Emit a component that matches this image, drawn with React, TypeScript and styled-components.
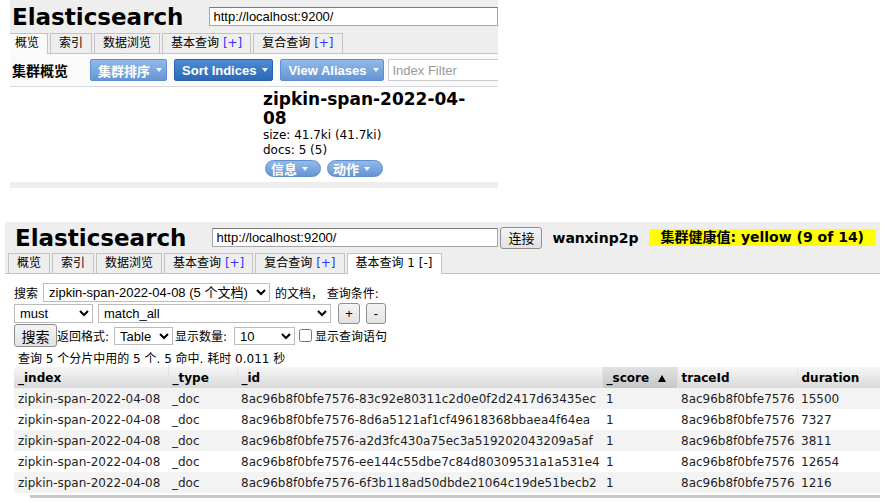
import styled, { createGlobalStyle } from "styled-components";

const GlobalStyle = createGlobalStyle`
  html, body {
    margin: 0;
    padding: 0;
    background: #fff;
  }
  body {
    font-family: "DejaVu Sans", "Noto Sans CJK SC", sans-serif;
    font-size: 12px;
    color: #000;
  }
`;

const Page = styled.div`
  width: 888px;
  height: 503px;
  overflow: hidden;
  display: flex;
  flex-direction: column;
`;

const Shot = styled.div<{ $left: number; $width: number; $top?: number }>`
  flex-shrink: 0;
  margin: ${(p) => p.$top ?? 0}px 0 0 ${(p) => p.$left}px;
  width: ${(p) => p.$width}px;
  overflow: hidden;
`;

const Head = styled.div`
  background: #eee;
`;

const TitleRow = styled.div<{ $height: number; $pad: number }>`
  display: flex;
  align-items: center;
  height: ${(p) => p.$height}px;
  padding-left: ${(p) => p.$pad}px;
  white-space: nowrap;
`;

const Brand = styled.div`
  font-family: "DejaVu Sans", sans-serif;
  font-weight: bold;
  font-size: 23px;
  line-height: 26px;
  flex-shrink: 0;
`;

const UrlInput = styled.input<{ $width: number; $gap: number }>`
  flex-shrink: 0;
  margin-left: ${(p) => p.$gap}px;
  width: ${(p) => p.$width}px;
  height: 19px;
  box-sizing: border-box;
  padding: 0 3px;
  border: 1px solid #a5a5a5;
  border-top-color: #7a7a7a;
  background: #fff;
  font-family: "Liberation Sans", Arial, sans-serif;
  font-size: 13px;
  color: #000;
  outline: none;
`;

const TabBar = styled.div<{ $pad: number }>`
  display: flex;
  align-items: flex-end;
  gap: 2px;
  height: 20px;
  padding-left: ${(p) => p.$pad}px;
  border-bottom: 1px solid #c4c4c4;
`;

const Tab = styled.div<{ $active?: boolean; $activeBg?: string }>`
  box-sizing: border-box;
  height: ${(p) => (p.$active ? 21 : 20)}px;
  margin-bottom: ${(p) => (p.$active ? -1 : 0)}px;
  padding: 0 8px;
  border: 1px solid #c4c4c4;
  border-bottom: none;
  background: ${(p) => (p.$active ? p.$activeBg ?? "#fff" : "#eee")};
  line-height: 19px;
  font-size: 12px;
  white-space: nowrap;
`;

const Plus = styled.span`
  color: #3333ff;
`;

/* ---------- top screenshot: cluster overview ---------- */

const Toolbar = styled.div`
  display: flex;
  align-items: center;
  height: 32px;
  padding-left: 2px;
  background: #fafafa;
  border-bottom: 1px solid #d5d9df;
  white-space: nowrap;
`;

const SectionLabel = styled.span`
  font-weight: bold;
  font-size: 14px;
  margin-right: 22px;
`;

const DropButton = styled.div<{ $tone: "light" | "dark" }>`
  display: inline-flex;
  align-items: center;
  gap: 6px;
  flex-shrink: 0;
  height: 22px;
  box-sizing: border-box;
  padding: 0 4px 0 7px;
  margin-right: 7px;
  border-radius: 2px;
  border: 1px solid ${(p) => (p.$tone === "dark" ? "#2b64ad" : "#5e8ed0")};
  background: ${(p) =>
    p.$tone === "dark"
      ? "linear-gradient(#4d8cd6, #2c69b6)"
      : "linear-gradient(#93b9e8, #6496d4)"};
  color: #fff;
  font-family: "Liberation Sans", "Noto Sans CJK SC", sans-serif;
  font-weight: bold;
  font-size: 13px;
`;

const Caret = styled.span`
  width: 0;
  height: 0;
  border-left: 3.5px solid transparent;
  border-right: 3.5px solid transparent;
  border-top: 4px solid rgba(255, 255, 255, 0.92);
`;

const FilterInput = styled.input`
  flex-shrink: 0;
  margin-left: -3px;
  width: 120px;
  height: 22px;
  box-sizing: border-box;
  padding: 0 4px;
  border: 1px solid #ccc;
  background: #fff;
  font-family: "Liberation Sans", Arial, sans-serif;
  font-size: 13px;
  outline: none;

  &::placeholder {
    color: #999;
  }
`;

const Overview = styled.div`
  height: 91px;
  box-sizing: border-box;
  overflow: hidden;
  padding: 3px 0 0 253px;
  background: #fff;
`;

const IndexCard = styled.div`
  width: 215px;
`;

const IndexName = styled.div`
  font-weight: bold;
  font-size: 17px;
  line-height: 19px;
`;

const Stat = styled.div`
  font-size: 12px;
  line-height: 15px;
`;

const PillRow = styled.div`
  display: flex;
  gap: 6px;
  margin-top: 2px;
  padding-left: 2px;
`;

const Pill = styled.div`
  display: inline-flex;
  align-items: center;
  gap: 5px;
  width: 56px;
  height: 17px;
  box-sizing: border-box;
  padding: 0 0 0 5px;
  border-radius: 9px;
  border: 1px solid #5e8ed0;
  background: linear-gradient(#93b9e8, #6496d4);
  color: #fff;
  font-family: "Noto Sans CJK SC", sans-serif;
  font-weight: bold;
  font-size: 13px;
  line-height: 15px;
`;

const FooterBar = styled.div`
  height: 6px;
  margin-top: 4px;
  background: #eee;
`;

/* ---------- bottom screenshot: basic query ---------- */

const PlainButton = styled.button<{ $w: number; $h: number }>`
  flex-shrink: 0;
  width: ${(p) => p.$w}px;
  height: ${(p) => p.$h}px;
  padding: 0;
  box-sizing: border-box;
  border: 1px solid #8f8f8f;
  border-radius: 3px;
  background: linear-gradient(#f4f4f4, #e2e2e2);
  font-family: "Liberation Sans", "Noto Sans CJK SC", sans-serif;
  font-size: 13px;
  color: #000;
`;

const ClusterName = styled.span`
  margin-left: 10px;
  font-weight: bold;
  font-size: 14px;
`;

const Health = styled.span`
  margin-left: 11px;
  width: 227px;
  height: 17px;
  box-sizing: border-box;
  padding-left: 11px;
  background: #ffff00;
  font-weight: bold;
  font-size: 14px;
  line-height: 17px;
`;

const QueryBody = styled.div`
  padding: 9px 0 0 9px;
  background: #fff;
`;

const FormRow = styled.div<{ $h: number; $mt?: number }>`
  display: flex;
  align-items: center;
  height: ${(p) => p.$h}px;
  margin-top: ${(p) => p.$mt ?? 0}px;
  white-space: nowrap;
`;

const Label = styled.span<{ $ml?: number; $mr?: number }>`
  margin: 0 ${(p) => p.$mr ?? 0}px 0 ${(p) => p.$ml ?? 0}px;
  font-size: 12px;
`;

const Select = styled.select<{ $w: number; $h?: number; $ml?: number }>`
  flex-shrink: 0;
  width: ${(p) => p.$w}px;
  height: ${(p) => p.$h ?? 19}px;
  margin-left: ${(p) => p.$ml ?? 0}px;
  box-sizing: border-box;
  padding: 0 1px;
  border: 1px solid #bcbcbc;
  border-radius: 0;
  background: #fff;
  font-family: "Liberation Sans", "Noto Sans CJK SC", sans-serif;
  font-size: 13px;
  color: #000;
`;

const Check = styled.input`
  width: 13px;
  height: 13px;
  margin: 0 3px 0 4px;
`;

const Summary = styled.div`
  margin-top: 5px;
  padding-left: 4px;
  font-size: 12px;
  line-height: 14px;
`;

const Grid = styled.table`
  width: 866px;
  margin-top: 1px;
  table-layout: fixed;
  border-collapse: collapse;
`;

const Th = styled.th<{ $sorted?: boolean }>`
  height: 21px;
  padding: 0 4px;
  text-align: left;
  font-weight: bold;
  font-size: 12px;
  white-space: nowrap;
  overflow: hidden;
  border-right: 1px solid #e2e2e2;
  background: ${(p) =>
    p.$sorted
      ? "linear-gradient(#e2e2e2, #c6c6c6)"
      : "linear-gradient(#f6f6f6, #d9d9d9)"};
`;

const SortArrow = styled.span`
  display: inline-block;
  margin-left: 9px;
  width: 0;
  height: 0;
  border-left: 4px solid transparent;
  border-right: 4px solid transparent;
  border-bottom: 7px solid #000;
  vertical-align: 0;
`;

const Row = styled.tr<{ $odd: boolean }>`
  background: ${(p) => (p.$odd ? "#f3f3f3" : "#fff")};
`;

const Td = styled.td`
  height: 21px;
  padding: 0 4px;
  font-size: 12px;
  color: #1e1e1e;
  white-space: nowrap;
  overflow: hidden;
`;

const ScrollTrack = styled.div`
  width: 850px;
  height: 3px;
  margin: 2px 0 0 16px;
  background: #c8c8c8;
`;

const columns = [
  { name: "_index", width: 154 },
  { name: "_type", width: 69 },
  { name: "_id", width: 365 },
  { name: "_score", width: 75, sorted: true },
  { name: "traceId", width: 120 },
  { name: "duration", width: 83 },
];

const hits = [
  { id: "83c92e80311c2d0e0f2d2417d63435ec", duration: 15500 },
  { id: "8d6a5121af1cf49618368bbaea4f64ea", duration: 7327 },
  { id: "a2d3fc430a75ec3a519202043209a5af", duration: 3811 },
  { id: "ee144c55dbe7c84d80309531a1a531e4", duration: 12654 },
  { id: "6f3b118ad50dbde21064c19de51becb2", duration: 1216 },
];

const traceId = "8ac96b8f0bfe7576";
const indexName = "zipkin-span-2022-04-08";

export default function App() {
  return (
    <Page>
      <GlobalStyle />

      <Shot $left={10} $width={488}>
        <Head>
          <TitleRow $height={33} $pad={2}>
            <Brand>Elasticsearch</Brand>
            <UrlInput
              $width={289}
              $gap={26}
              readOnly
              value="http://localhost:9200/"
            />
          </TitleRow>
          <TabBar $pad={0}>
            <Tab $active $activeBg="#fafafa" style={{ marginLeft: -4 }}>
              概览
            </Tab>
            <Tab>索引</Tab>
            <Tab>数据浏览</Tab>
            <Tab>
              基本查询 <Plus>[+]</Plus>
            </Tab>
            <Tab>
              复合查询 <Plus>[+]</Plus>
            </Tab>
          </TabBar>
        </Head>
        <Toolbar>
          <SectionLabel>集群概览</SectionLabel>
          <DropButton $tone="light">
            集群排序
            <Caret />
          </DropButton>
          <DropButton $tone="dark">
            Sort Indices
            <Caret />
          </DropButton>
          <DropButton $tone="light">
            View Aliases
            <Caret />
          </DropButton>
          <FilterInput placeholder="Index Filter" />
        </Toolbar>
        <Overview>
          <IndexCard>
            <IndexName>{indexName}</IndexName>
            <Stat>size: 41.7ki (41.7ki)</Stat>
            <Stat>docs: 5 (5)</Stat>
            <PillRow>
              <Pill>
                信息
                <Caret />
              </Pill>
              <Pill>
                动作
                <Caret />
              </Pill>
            </PillRow>
          </IndexCard>
        </Overview>
        <FooterBar />
      </Shot>

      <Shot $left={5} $width={875} $top={34}>
        <Head>
          <TitleRow $height={31} $pad={10}>
            <Brand>Elasticsearch</Brand>
            <UrlInput
              $width={286}
              $gap={26}
              readOnly
              value="http://localhost:9200/"
            />
            <PlainButton $w={42} $h={22} style={{ marginLeft: 2 }}>
              连接
            </PlainButton>
            <ClusterName>wanxinp2p</ClusterName>
            <Health>集群健康值: yellow (9 of 14)</Health>
          </TitleRow>
          <TabBar $pad={3}>
            <Tab>概览</Tab>
            <Tab>索引</Tab>
            <Tab>数据浏览</Tab>
            <Tab>
              基本查询 <Plus>[+]</Plus>
            </Tab>
            <Tab>
              复合查询 <Plus>[+]</Plus>
            </Tab>
            <Tab $active>基本查询 1 [-]</Tab>
          </TabBar>
        </Head>

        <QueryBody>
          <FormRow $h={19}>
            <Label $mr={5}>搜索</Label>
            <Select $w={227} defaultValue="idx">
              <option value="idx">{indexName} (5 个文档)</option>
            </Select>
            <Label $ml={5}>的文档， 查询条件:</Label>
          </FormRow>
          <FormRow $h={21} $mt={1}>
            <Select $w={79} defaultValue="must">
              <option value="must">must</option>
            </Select>
            <Select $w={233} $ml={5} defaultValue="match_all">
              <option value="match_all">match_all</option>
            </Select>
            <PlainButton $w={22} $h={21} style={{ marginLeft: 7 }}>
              +
            </PlainButton>
            <PlainButton $w={20} $h={21} style={{ marginLeft: 6 }}>
              -
            </PlainButton>
          </FormRow>
          <FormRow $h={23}>
            <PlainButton $w={43} $h={23} style={{ fontSize: 14 }}>
              搜索
            </PlainButton>
            <Label $mr={5}>返回格式:</Label>
            <Select $w={59} $h={18} defaultValue="table">
              <option value="table">Table</option>
            </Select>
            <Label $ml={2} $mr={7}>
              显示数量:
            </Label>
            <Select $w={61} $h={18} defaultValue="10">
              <option value="10">10</option>
            </Select>
            <Check type="checkbox" />
            <Label>显示查询语句</Label>
          </FormRow>
          <Summary>查询 5 个分片中用的 5 个. 5 命中. 耗时 0.011 秒</Summary>

          <Grid>
            <colgroup>
              {columns.map((c) => (
                <col key={c.name} style={{ width: c.width }} />
              ))}
            </colgroup>
            <thead>
              <tr>
                {columns.map((c) => (
                  <Th key={c.name} $sorted={c.sorted}>
                    {c.name}
                    {c.sorted && <SortArrow />}
                  </Th>
                ))}
              </tr>
            </thead>
            <tbody>
              {hits.map((h, i) => (
                <Row key={h.id} $odd={i % 2 === 0}>
                  <Td>{indexName}</Td>
                  <Td>_doc</Td>
                  <Td>
                    {traceId}-{h.id}
                  </Td>
                  <Td>1</Td>
                  <Td>{traceId}</Td>
                  <Td>{h.duration}</Td>
                </Row>
              ))}
            </tbody>
          </Grid>
          <ScrollTrack />
        </QueryBody>
      </Shot>
    </Page>
  );
}
